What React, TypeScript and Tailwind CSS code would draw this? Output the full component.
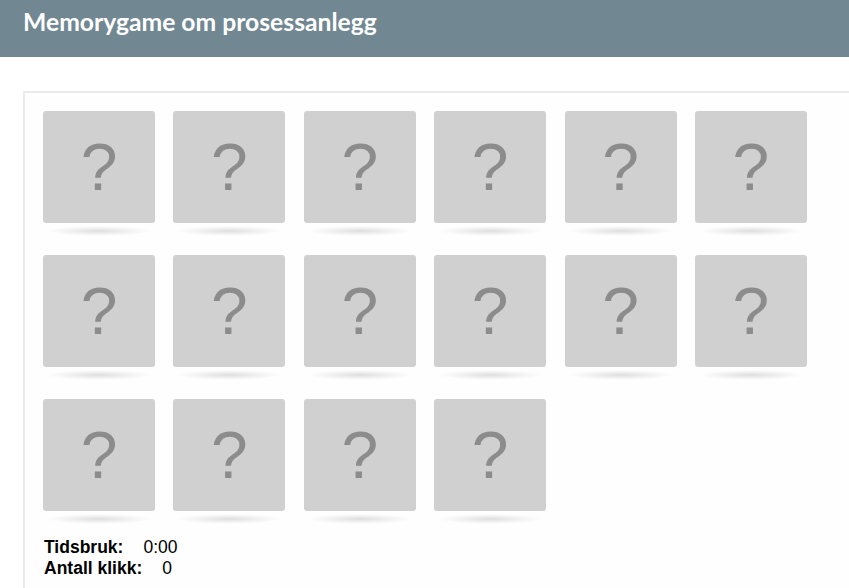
const cards = Array.from({ length: 16 }, (_, i) => i);

function Card() {
  return (
    <div className="flex flex-col">
      <div className="flex h-[112px] w-[112px] items-center justify-center rounded-[3px] bg-[#d0d0d0]">
        <span className="font-['Liberation_Sans',Arial,sans-serif] text-[66px] leading-none text-[#8c8c8c]">
          ?
        </span>
      </div>
      {/* soft floor shadow under each tile */}
      <div className="mx-[4px] mt-[3px] h-[10px] bg-[radial-gradient(ellipse_at_center,#dedede_0%,#efefef_35%,transparent_70%)]" />
    </div>
  );
}

export default function App() {
  return (
    <div className="h-[588px] w-full overflow-hidden bg-white">
      <header className="h-[57px] bg-[#718792] px-[23px] pt-[6px]">
        <h1 className="font-['Lato',sans-serif] text-[24.7px] font-bold leading-[32px] text-white">
          Memorygame om prosessanlegg
        </h1>
      </header>
      <main className="ml-[23px] mt-[34px] w-[860px] border-2 border-[#ebebeb] bg-[#fefefe] px-[18px] pb-[40px] pt-[18px]">
        <div className="grid grid-cols-[repeat(6,112px)] gap-x-[18.4px] gap-y-[19px]">
          {cards.map((i) => (
            <Card key={i} />
          ))}
        </div>
        <div className="mt-[13px] pl-[1px] font-['Liberation_Sans',Arial,sans-serif] text-[17.5px] leading-[21px] text-black">
          <div>
            <b>Tidsbruk:</b>
            <span className="ml-[20px]">0:00</span>
          </div>
          <div>
            <b>Antall klikk:</b>
            <span className="ml-[20px]">0</span>
          </div>
        </div>
      </main>
    </div>
  );
}
